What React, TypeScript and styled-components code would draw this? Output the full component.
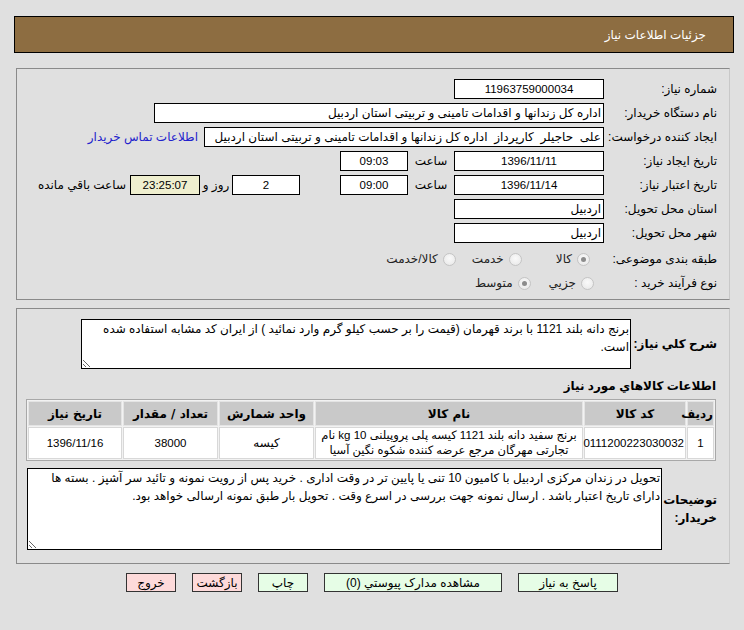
import React from "react";
import styled, { createGlobalStyle } from "styled-components";

const Global = createGlobalStyle`
  html, body { margin: 0; padding: 0; background: #e0e0e0; }
  body { font-family: "Liberation Sans", "DejaVu Sans", sans-serif; font-size: 12px; color: #000; }
  * { box-sizing: border-box; }
`;

const Page = styled.div`
  direction: rtl;
  width: 744px;
  height: 630px;
  padding-top: 16px;
  background: #e0e0e0;
`;

const Header = styled.div`
  margin: 0 10px 0 14px;
  height: 37px;
  background: #8d6d41;
  border: 1px solid #000;
  color: #fff;
  display: flex;
  align-items: center;
  padding-right: 27px;
  font-size: 12px;
`;

const Panel = styled.div<{ $mt: number; $pt: number; $pb: number }>`
  margin: ${(p) => p.$mt}px 14px 0 16px;
  border: 1px solid #8a8a8a;
  border-right-color: #c8c8c8;
  border-bottom-color: #8a8a8a;
  padding: ${(p) => p.$pt}px 12px ${(p) => p.$pb}px 10px;
`;

const Row = styled.div<{ $h?: number; $mt?: number }>`
  display: flex;
  align-items: center;
  height: ${(p) => p.$h ?? 24}px;
  margin-top: ${(p) => p.$mt ?? 0}px;
`;

const Label = styled.div<{ $w?: number; $bold?: boolean; $wrap?: boolean }>`
  width: ${(p) => p.$w ?? 113}px;
  flex: none;
  text-align: right;
  font-weight: ${(p) => (p.$bold ? "bold" : "normal")};
  white-space: ${(p) => (p.$wrap ? "normal" : "nowrap")};
  line-height: 18px;
`;

const Box = styled.div<{ $w: number; $center?: boolean; $bg?: string }>`
  width: ${(p) => p.$w}px;
  height: 20px;
  flex: none;
  border: 1px solid #000;
  background: ${(p) => p.$bg ?? "#fff"};
  text-align: ${(p) => (p.$center ? "center" : "right")};
  line-height: 18px;
  padding: 0 2px;
  white-space: pre;
  overflow: hidden;
  font-size: ${(p) => (p.$center ? "11.5px" : "12px")};
`;

const Word = styled.div<{ $w: number }>`
  width: ${(p) => p.$w}px;
  flex: none;
  text-align: center;
  white-space: nowrap;
`;

const Plain = styled.div<{ $mr?: number }>`
  margin-right: ${(p) => p.$mr ?? 0}px;
  white-space: nowrap;
`;

const Spacer = styled.div<{ $w: number }>`
  width: ${(p) => p.$w}px;
  flex: none;
`;

const RadioGroup = styled.div<{ $mr: number }>`
  display: flex;
  align-items: center;
  margin-right: ${(p) => p.$mr}px;
  color: #222;
`;

const RadioDot = styled.span<{ $on?: boolean }>`
  width: 13px;
  height: 13px;
  border-radius: 50%;
  border: 1px solid #c4c4c4;
  background: radial-gradient(circle at 50% 40%, #fafafa, #e6e6e6);
  display: inline-flex;
  align-items: center;
  justify-content: center;
  margin-left: 5px;
  &::after {
    content: "";
    width: 5px;
    height: 5px;
    border-radius: 50%;
    background: ${(p) => (p.$on ? "#8c8c8c" : "transparent")};
  }
`;

const Area = styled.textarea<{ $w: number; $h: number }>`
  width: ${(p) => p.$w}px;
  height: ${(p) => p.$h}px;
  flex: none;
  border: 1px solid #000;
  background: #fff;
  font-family: "Liberation Sans", "DejaVu Sans", sans-serif;
  font-size: 12px;
  line-height: 18px;
  padding: 0 1px;
  direction: rtl;
  text-align: right;
  resize: both;
  overflow: hidden;
  outline: none;
  color: #000;
`;

const Heading = styled.div`
  font-weight: bold;
  margin: 9px 1px 5px 0;
  height: 16px;
  line-height: 16px;
`;

const Table = styled.table`
  width: 688px;
  margin-right: 1px;
  table-layout: fixed;
  border-collapse: separate;
  border-spacing: 1px;
  border: 1px solid #a8a8a8;
  background: #f2f2f2;
  font-size: 12px;
`;

const Th = styled.th<{ $w: number }>`
  width: ${(p) => p.$w}px;
  background: #c9c9c9;
  height: 25px;
  font-weight: bold;
  text-align: center;
  padding: 0;
  border: 1px solid #e4e4e4;
  font-family: "DejaVu Sans", sans-serif;
`;

const Td = styled.td<{ $size?: number }>`
  background: #fff;
  text-align: center;
  padding: 0 1px;
  height: 31px;
  line-height: 15px;
  border: 1px solid #d8d8d8;
  font-size: ${(p) => p.$size ?? 12}px;
`;

const Link = styled.a`
  color: #2222cc;
  text-decoration: none;
  margin-right: 6px;
  white-space: nowrap;
`;

const Buttons = styled.div`
  display: flex;
  justify-content: center;
  gap: 16px;
  margin-top: 9px;
`;

const Btn = styled.button<{ $w: number; $kind: "ok" | "no" }>`
  width: ${(p) => p.$w}px;
  height: 19px;
  border: 1px solid #333;
  background: ${(p) => (p.$kind === "ok" ? "#e6fde6" : "#fddada")};
  font-family: "Liberation Sans", "DejaVu Sans", sans-serif;
  font-size: 12px;
  padding: 0;
  color: #000;
  line-height: 16px;
`;

export default function App() {
  return (
    <>
      <Global />
      <Page>
        <Header>جزئیات اطلاعات نیاز</Header>
        <Panel $mt={15} $pt={8} $pb={4}>
          <Row>
            <Label>شماره نیاز:</Label>
            <Box $w={150} $center>11963759000034</Box>
          </Row>
          <Row>
            <Label>نام دستگاه خریدار:</Label>
            <Box $w={450}>اداره کل زندانها و اقدامات تامینی و تربیتی استان اردبیل</Box>
          </Row>
          <Row>
            <Label>ایجاد کننده درخواست:</Label>
            <Box $w={400}>علی  حاجیلر  کارپرداز  اداره کل زندانها و اقدامات تامینی و تربیتی استان اردبیل</Box>
            <Link href="#">اطلاعات تماس خریدار</Link>
          </Row>
          <Row>
            <Label>تاریخ ایجاد نیاز:</Label>
            <Box $w={150} $center>1396/11/11</Box>
            <Word $w={46}>ساعت</Word>
            <Box $w={68} $center>09:03</Box>
          </Row>
          <Row>
            <Label>تاریخ اعتبار نیاز:</Label>
            <Box $w={150} $center>1396/11/14</Box>
            <Word $w={46}>ساعت</Word>
            <Box $w={68} $center>09:00</Box>
            <Spacer $w={40} />
            <Box $w={68} $center>2</Box>
            <Word $w={32}>روز و</Word>
            <Box $w={70} $center $bg="#efefcf">23:25:07</Box>
            <Plain $mr={4}>ساعت باقي مانده</Plain>
          </Row>
          <Row>
            <Label>استان محل تحویل:</Label>
            <Box $w={150}>اردبیل</Box>
          </Row>
          <Row>
            <Label>شهر محل تحویل:</Label>
            <Box $w={150}>اردبیل</Box>
          </Row>
          <Row $mt={2}>
            <Label>طبقه بندی موضوعی:</Label>
            <RadioGroup $mr={14}>
              <RadioDot $on />
              <span>کالا</span>
            </RadioGroup>
            <RadioGroup $mr={34}>
              <RadioDot />
              <span>خدمت</span>
            </RadioGroup>
            <RadioGroup $mr={16}>
              <RadioDot />
              <span>کالا/خدمت</span>
            </RadioGroup>
          </Row>
          <Row>
            <Label>نوع فرآیند خرید :</Label>
            <RadioGroup $mr={10}>
              <RadioDot />
              <span>جزیي</span>
            </RadioGroup>
            <RadioGroup $mr={18}>
              <RadioDot $on />
              <span>متوسط</span>
            </RadioGroup>
          </Row>
        </Panel>
        <Panel $mt={8} $pt={10} $pb={13}>
          <Row $h={50}>
            <Label $w={86} $bold>شرح کلي نياز:</Label>
            <Area $w={550} $h={50} readOnly defaultValue="برنج دانه بلند 1121 با برند قهرمان (قیمت را بر حسب کیلو گرم وارد نمائید ) از ایران کد مشابه استفاده شده است." />
          </Row>
          <Heading>اطلاعات کالاهاي مورد نياز</Heading>
          <Table>
            <thead>
              <tr>
                <Th $w={27}>رديف</Th>
                <Th $w={102}>کد کالا</Th>
                <Th $w={268}>نام کالا</Th>
                <Th $w={95}>واحد شمارش</Th>
                <Th $w={95}>تعداد / مقدار</Th>
                <Th $w={94}>تاریخ نیاز</Th>
              </tr>
            </thead>
            <tbody>
              <tr>
                <Td $size={11.5}>1</Td>
                <Td $size={11.5}>0111200223030032</Td>
                <Td $size={11.5}>برنج سفید دانه بلند 1121 کیسه پلی پروپیلنی 10 kg نام تجارتی مهرگان مرجع عرضه کننده شکوه نگین آسیا</Td>
                <Td>کیسه</Td>
                <Td $size={11.5}>38000</Td>
                <Td $size={11.5}>1396/11/16</Td>
              </tr>
            </tbody>
          </Table>
          <Row $h={82} $mt={7}>
            <Label $w={55} $bold $wrap>توضیحات خریدار:</Label>
            <Area $w={635} $h={82} readOnly defaultValue="تحویل در زندان مرکزی اردبیل با کامیون 10 تنی یا پایین تر در وقت اداری . خرید پس از رویت نمونه و تائید سر آشپز . بسته ها دارای تاریخ اعتبار باشد . ارسال نمونه جهت بررسی در اسرع وقت . تحویل بار طبق نمونه ارسالی خواهد بود." />
          </Row>
        </Panel>
        <Buttons>
          <Btn $w={100} $kind="ok">پاسخ به نیاز</Btn>
          <Btn $w={178} $kind="ok">مشاهده مدارک پیوستي (0)</Btn>
          <Btn $w={50} $kind="ok">چاپ</Btn>
          <Btn $w={50} $kind="no">بازگشت</Btn>
          <Btn $w={50} $kind="no">خروج</Btn>
        </Buttons>
      </Page>
    </>
  );
}
